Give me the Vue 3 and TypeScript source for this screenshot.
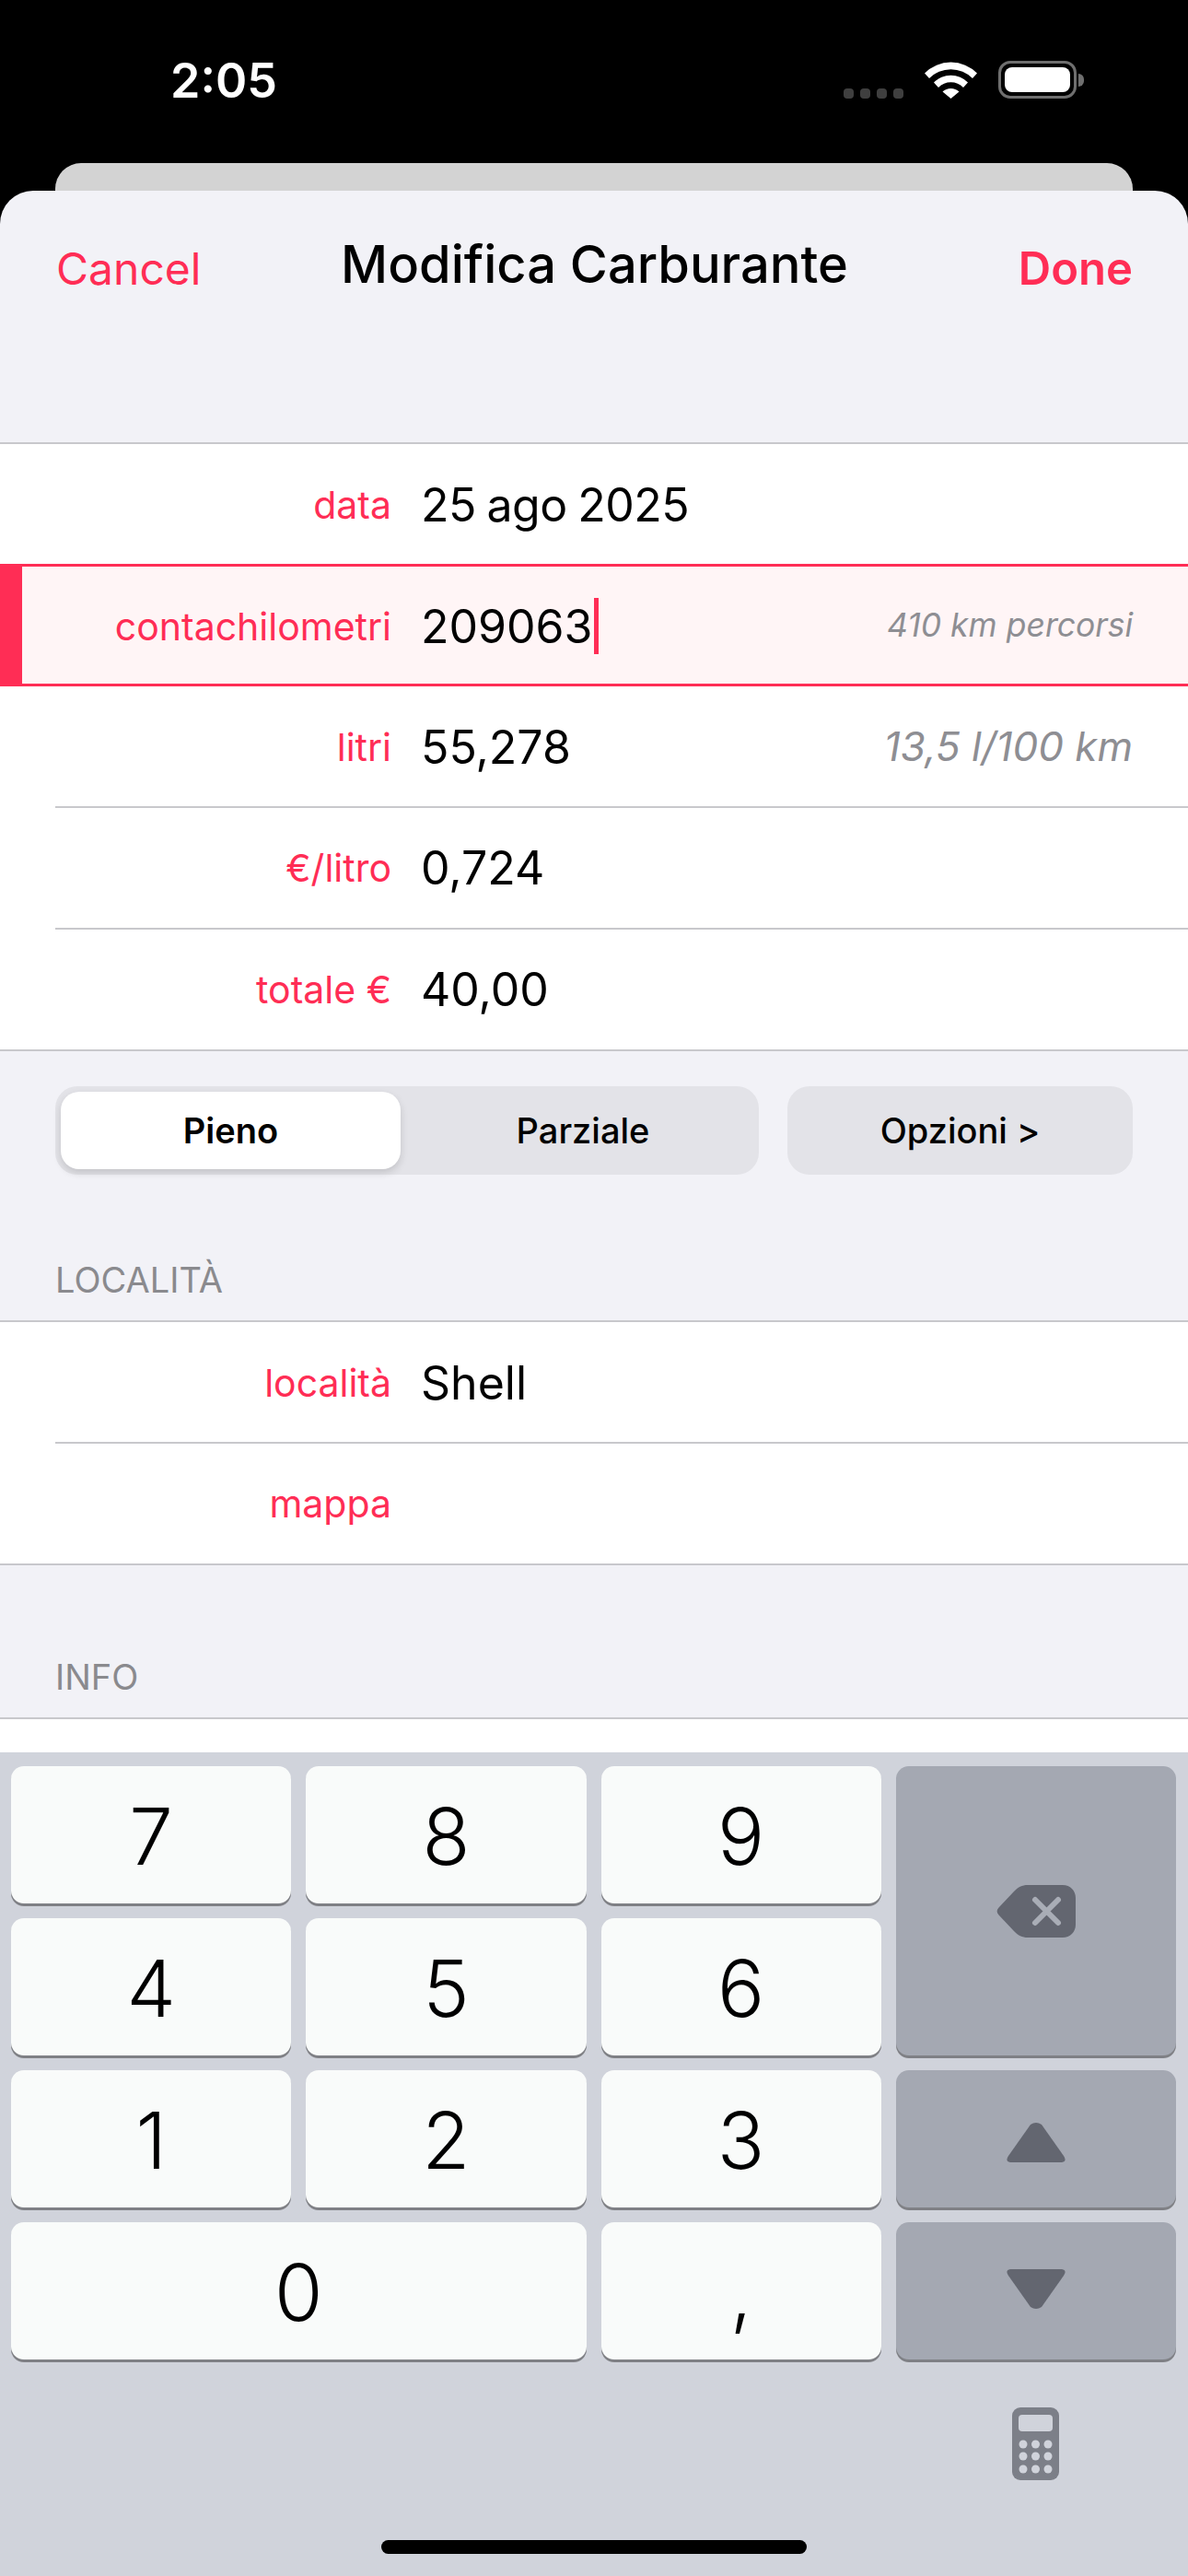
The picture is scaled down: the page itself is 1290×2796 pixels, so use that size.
<script setup lang="ts">
interface KeyItem {
  label: string
  wide?: boolean
}

const digitKeys: KeyItem[] = [
  { label: '1' },
  { label: '2' },
  { label: '3' },
]
const topKeys: string[][] = [
  ['7', '8', '9'],
  ['4', '5', '6'],
]
</script>

<template>
  <div class="phone">
    <div class="status">
      <span class="time">2:05</span>
      <div class="status-icons">
        <div class="dots"><i></i><i></i><i></i><i></i></div>
        <svg class="wifi" width="57" height="41" viewBox="0 0 57 41">
          <path fill="#fff" d="M0 13.5A40 40 0 0 1 57 13.5L52 19A33 33 0 0 0 5 19Z" />
          <path fill="#fff" d="M10 23.5A26 26 0 0 1 47 23.5L42 29A19 19 0 0 0 15 29Z" />
          <path fill="#fff" d="M19.5 33.5A13 13 0 0 1 37.5 33.5L28.5 41Z" />
        </svg>
        <div class="battery">
          <div class="battery-body"><div class="battery-fill"></div></div>
          <div class="battery-cap"></div>
        </div>
      </div>
    </div>
    <div class="back-card"></div>

    <div class="sheet">
      <div class="nav">
        <span class="nav-btn">Cancel</span>
        <span class="nav-title">Modifica Carburante</span>
        <span class="nav-btn done">Done</span>
      </div>

      <div class="content">
        <div class="list">
          <div class="row"><span class="label">data</span><span class="value date">25 ago 2025</span></div>
          <div class="row active">
            <span class="label">contachilometri</span>
            <span class="value">209063<span class="cursor"></span></span>
            <span class="hint small">410 km percorsi</span>
          </div>
          <div class="row"><span class="label">litri</span><span class="value">55,278</span><span class="hint">13,5 l/100 km</span></div>
          <div class="row inset"><span class="label">€/litro</span><span class="value">0,724</span></div>
          <div class="row inset"><span class="label">totale €</span><span class="value">40,00</span></div>
        </div>

        <div class="controls">
          <div class="segment">
            <div class="seg-item selected">Pieno</div>
            <div class="seg-item other">Parziale</div>
          </div>
          <div class="options">Opzioni &gt;</div>
        </div>

        <div class="section-title first">LOCALITÀ</div>
        <div class="list">
          <div class="row"><span class="label">località</span><span class="value">Shell</span></div>
          <div class="row inset"><span class="label">mappa</span></div>
        </div>

        <div class="section-title second">INFO</div>
        <div class="list open"></div>
      </div>

      <div class="keyboard">
        <div class="keys">
          <template v-for="(keyRow, i) in topKeys" :key="i">
            <div v-for="k in keyRow" :key="k" class="key">{{ k }}</div>
            <div v-if="i === 0" class="key fn tall">
              <svg width="86" height="57" viewBox="0 0 86 57">
                <path fill="#636670" d="M2.5 24.5L19 7C23 2.5 28 0 34 0H72C80 0 86 6 86 14V43C86 51 80 57 72 57H34C28 57 23 54.5 19 50L2.5 32.5C0 30 0 27 2.5 24.5Z" />
                <path stroke="#a9adb6" stroke-width="6" stroke-linecap="round" d="M42 16L67 41M67 16L42 41" />
              </svg>
            </div>
          </template>
          <div v-for="k in digitKeys" :key="k.label" class="key">{{ k.label }}</div>
          <div class="key fn">
            <svg class="arrow-up" width="64" height="44" viewBox="0 0 64 44">
              <path fill="#636670" d="M26 3Q32 -1 38 3L62 37Q66 43 60 44H4Q-2 43 2 37Z" />
            </svg>
          </div>
          <div class="key wide">0</div>
          <div class="key">,</div>
          <div class="key fn">
            <svg class="arrow-down" width="64" height="44" viewBox="0 0 64 44">
              <path fill="#636670" d="M26 41Q32 45 38 41L62 7Q66 1 60 0H4Q-2 1 2 7Z" />
            </svg>
          </div>
          <svg class="calc" width="51" height="79" viewBox="0 0 51 79">
            <rect width="51" height="79" rx="9" fill="#7c7f88" />
            <rect x="7" y="8" width="37" height="18" rx="4" fill="#d0d3db" />
            <g fill="#d0d3db">
              <circle cx="12" cy="40" r="4.5" /><circle cx="25.5" cy="40" r="4.5" /><circle cx="39" cy="40" r="4.5" />
              <circle cx="12" cy="53" r="4.5" /><circle cx="25.5" cy="53" r="4.5" /><circle cx="39" cy="53" r="4.5" />
              <circle cx="12" cy="67" r="4.5" /><circle cx="25.5" cy="67" r="4.5" /><circle cx="39" cy="67" r="4.5" />
            </g>
          </svg>
        </div>
        <div class="home-bar"></div>
      </div>
    </div>
  </div>
</template>

<style>
html,
body {
  margin: 0;
  background: #000;
}
</style>

<style scoped>
.phone {
  width: 1290px;
  height: 2796px;
  display: flex;
  flex-direction: column;
  background: #000;
  overflow: hidden;
  font-family: Inter, "Liberation Sans", sans-serif;
}

.status {
  height: 177px;
  flex: none;
  position: relative;
  color: #fff;
}

.time {
  position: absolute;
  left: 185px;
  top: 56px;
  font-size: 52px;
  line-height: 63px;
  font-weight: 600;
}

.status-icons {
  position: absolute;
  left: 916px;
  top: 65px;
  display: flex;
  align-items: flex-end;
  height: 42px;
}

.dots {
  display: flex;
  gap: 7px;
  margin-right: 23px;
}

.dots i {
  width: 11px;
  height: 11px;
  border-radius: 4px;
  background: #3f3f3f;
  display: block;
}

.wifi {
  margin-right: 23px;
}

.battery {
  display: flex;
  align-items: center;
}

.battery-body {
  width: 85px;
  height: 41px;
  box-sizing: border-box;
  border: 3px solid #6f6f6f;
  border-radius: 13px;
  padding: 4px;
}

.battery-fill {
  height: 100%;
  background: #fff;
  border-radius: 8px;
}

.battery-cap {
  width: 6px;
  height: 14px;
  margin-left: 2px;
  background: #6f6f6f;
  border-radius: 0 7px 7px 0;
}

.back-card {
  height: 30px;
  flex: none;
  margin: 0 60px;
  background: #d3d3d3;
  border-radius: 28px 28px 0 0;
}

.sheet {
  flex: 1;
  min-height: 0;
  display: flex;
  flex-direction: column;
  background: #f2f2f7;
  border-radius: 36px 36px 0 0;
}

.nav {
  height: 273px;
  flex: none;
  box-sizing: border-box;
  padding: 48px 60px 0 61px;
  display: grid;
  grid-template-columns: 1fr auto 1fr;
  align-items: start;
}

.nav-btn {
  font-size: 48px;
  line-height: 64px;
  color: #ff2d55;
  margin-top: 5px;
}

.nav-btn.done {
  font-size: 49px;
  font-weight: 600;
  text-align: right;
}

.nav-title {
  font-size: 56px;
  line-height: 64px;
  font-weight: 500;
  color: #000;
}

.content {
  flex: 1;
  min-height: 0;
  overflow: hidden;
}

.list {
  background: #fff;
  border-top: 2px solid #c8c8cc;
  border-bottom: 2px solid #c8c8cc;
}

.list.open {
  height: 100px;
  border-bottom: 0;
}

.row {
  height: 130px;
  display: flex;
  align-items: center;
  position: relative;
  padding-right: 60px;
}

.row.inset {
  height: 132px;
}

.row.inset::before {
  content: "";
  position: absolute;
  left: 60px;
  right: 0;
  top: 0;
  height: 2px;
  background: #c8c8cc;
}

.row.active {
  height: 133px;
  box-sizing: border-box;
  background: #fff5f6;
  border-top: 3px solid #ff2d55;
  border-bottom: 3px solid #ff2d55;
  border-left: 24px solid #ff2d55;
}

.label {
  width: 425px;
  flex: none;
  box-sizing: border-box;
  padding-top: 2px;
  text-align: right;
  font-size: 41px;
  color: #ff2d55;
}

.row.active .label {
  width: 401px;
}

.value {
  margin-left: 32px;
  font-size: 50px;
  color: #000;
  display: flex;
  align-items: center;
  padding-top: 2px;
}

.value.date {
  word-spacing: -2px;
  letter-spacing: -0.5px;
}

.cursor {
  width: 5px;
  height: 61px;
  margin-left: 2px;
  background: #ff2d55;
}

.hint {
  margin-left: auto;
  font-size: 44px;
  font-style: italic;
  color: #8e8e93;
}

.hint.small {
  font-size: 35.5px;
}

.controls {
  display: flex;
  gap: 31px;
  padding: 38px 60px 0;
}

.segment {
  width: 764px;
  height: 96px;
  box-sizing: border-box;
  padding: 6px;
  display: grid;
  grid-template-columns: 1fr 1fr;
  background: #e3e3e8;
  border-radius: 24px;
}

.seg-item {
  display: flex;
  align-items: center;
  justify-content: center;
  font-size: 38px;
  font-weight: 500;
  color: #000;
}

.seg-item.other {
  padding-left: 6px;
}

.seg-item.selected {
  width: 369px;
  background: #fff;
  border-radius: 20px;
  font-weight: 600;
  box-shadow: 0 4px 8px rgba(0, 0, 0, 0.14);
}

.options {
  flex: 1;
  display: flex;
  align-items: center;
  justify-content: center;
  background: #e3e3e8;
  border-radius: 24px;
  font-size: 38px;
  font-weight: 500;
  color: #000;
}

.section-title {
  padding-left: 60px;
  font-size: 38px;
  line-height: 44px;
  color: #8a8a8e;
}

.section-title.first {
  margin-top: 92px;
  margin-bottom: 22px;
}

.section-title.second {
  margin-top: 99px;
  margin-bottom: 22px;
}

.keyboard {
  height: 894px;
  flex: none;
  position: relative;
  box-sizing: border-box;
  padding: 15px 13px 0 12px;
  background: #d0d3db;
}

.keys {
  display: grid;
  grid-template-columns: repeat(4, 1fr);
  grid-auto-rows: 149px;
  column-gap: 16px;
  row-gap: 16px;
}

.key {
  display: flex;
  align-items: center;
  justify-content: center;
  box-sizing: border-box;
  padding-top: 4px;
  background: #f9fbfa;
  border-radius: 14px;
  box-shadow: 0 3px 0 #7f8085;
  font-size: 85px;
  font-weight: 300;
  color: #000;
}

.key.wide {
  grid-column: span 2;
}

.key.fn {
  padding-top: 0;
  background: #a4a8b2;
}

.key.tall {
  grid-row: 1 / span 2;
  grid-column: 4;
}

.arrow-up {
  margin-top: 7px;
}

.arrow-down {
  margin-bottom: 3px;
}

.calc {
  grid-column: 4;
  justify-self: center;
  margin-top: 36px;
}

.home-bar {
  position: absolute;
  left: 414px;
  bottom: 24px;
  width: 462px;
  height: 15px;
  border-radius: 8px;
  background: #000;
}
</style>
